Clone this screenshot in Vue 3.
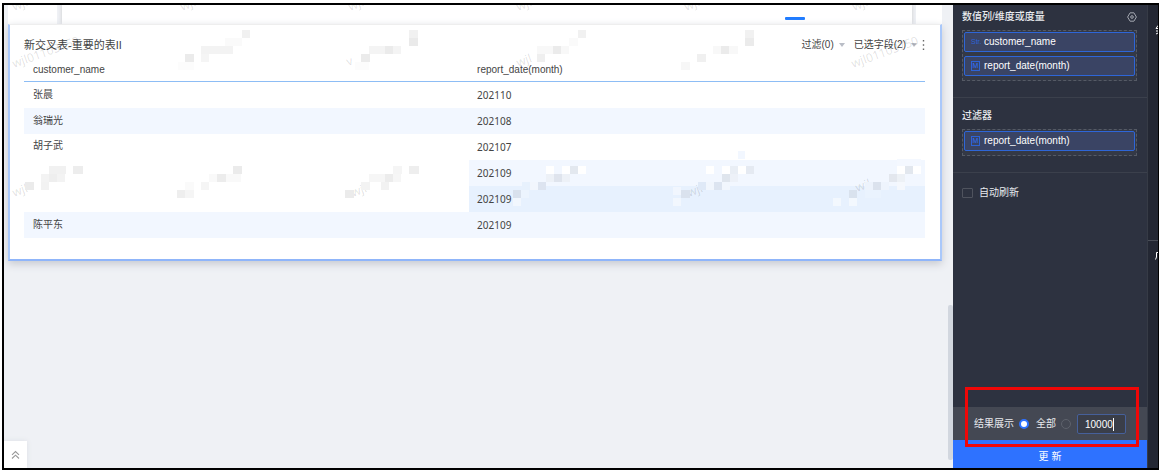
<script setup>
import { ref } from "vue";

let showAll = ref("all");
let limit = ref("10000");
let autoRefresh = ref(false);

//数值列和过滤器里的字段
let fields = ref([
  { type: "Str.", name: "customer_name" },
  { type: "M", name: "report_date(month)" },
]);
let filters = ref([{ type: "M", name: "report_date(month)" }]);

//span是合并的行数,没有name的行属于上一个人
let rows = ref([
  { name: "张晨", date: "202110" },
  { name: "翁瑞光", date: "202108", tint: "light" },
  { name: "胡子武", date: "202107", span: 3 },
  { date: "202109", tint: "light" },
  { date: "202109", tint: "deep" },
  { name: "陈平东", date: "202109", tint: "light" },
]);

//水印文字 [x, y, 文字]
let marks = [
  [14, 11, "wjl"], [182, 11, "wjl"], [350, 11, "wjl"], [518, 11, "wjl"], [686, 11, "wjl"], [854, 11, "wjl"],
  [14, 68, "wjl01103750"], [853, 68, "wjl01103750"],
  [348, 66, "v"], [518, 67, "wjl"],
  [14, 197, "wjl"], [353, 197, "wjl"], [689, 197, "wjl"], [857, 192, "wjl"],
];

//马赛克方块 [x, y, 宽, 颜色]
let blocks = [
  [242, 30, 8, "#f1f1f1"], [225, 38, 17, "#fafafa"], [201, 46, 32, "#f3f3f3"], [185, 54, 9, "#ebebeb"], [201, 54, 8, "#f5f5f5"], [178, 62, 16, "#fcfcfc"],
  [409, 30, 9, "#f1f1f1"], [409, 38, 9, "#eaeaea"], [369, 46, 32, "#f4f4f4"], [385, 46, 8, "#ebebeb"], [361, 54, 9, "#ebebeb"], [355, 62, 14, "#fcfcfc"],
  [578, 30, 8, "#f1f1f1"], [569, 38, 9, "#fafafa"], [537, 46, 32, "#f8f8f8"], [553, 46, 8, "#ebebeb"], [537, 54, 8, "#efefef"],
  [745, 30, 9, "#f1f1f1"], [745, 38, 9, "#ebebeb"], [713, 46, 25, "#f8f8f8"], [721, 46, 8, "#ebebeb"], [697, 54, 9, "#f0f0f0"], [681, 62, 9, "#f7f7f7"],
  [49, 166, 17, "#f1f1f1"], [73, 166, 10, "#ededed"], [41, 174, 24, "#f3f3f3"], [49, 174, 8, "#eeeeee"], [25, 182, 9, "#ebebeb"], [41, 182, 8, "#f2f2f2"],
  [233, 166, 9, "#ebebeb"], [209, 174, 32, "#f9f9f9"], [217, 174, 9, "#ececec"], [185, 182, 9, "#fafafa"], [201, 182, 8, "#f5f5f5"], [177, 190, 8, "#eeeeee"], [185, 190, 9, "#f5f5f5"],
  [393, 166, 9, "#f5f5f5"], [409, 166, 10, "#eeeeee"], [369, 174, 32, "#f6f6f6"], [385, 174, 8, "#ececec"], [361, 182, 9, "#f3f3f3"], [381, 182, 8, "#f2f2f2"], [345, 190, 9, "#ebebeb"],
  [546, 166, 8, "#ffffff"], [562, 166, 8, "#ffffff"], [570, 166, 8, "#e3e8ef"], [578, 166, 8, "#ffffff"], [546, 174, 24, "#edf1f7"], [554, 174, 8, "#dfe4ed"], [522, 182, 8, "#e7f1fd"], [530, 182, 8, "#f2f6fd"], [538, 182, 8, "#dde4f0"], [513, 190, 8, "#d9e1ed"], [521, 190, 8, "#ecf4fe"], [513, 198, 8, "#f2f7fe"],
  [738, 151, 7, "#f2f7ff"], [706, 166, 8, "#ffffff"], [722, 166, 8, "#ffffff"], [730, 166, 8, "#e9eef5"], [738, 166, 8, "#ffffff"], [746, 166, 8, "#e5eaf2"], [722, 174, 8, "#dfe5ed"], [730, 174, 8, "#edf1f8"], [698, 182, 8, "#dfe9f7"], [706, 182, 8, "#f1f6fd"], [714, 182, 8, "#dce4f0"], [722, 182, 8, "#f1f6fd"], [673, 187, 8, "#f1f6fe"], [681, 190, 9, "#dae2ee"], [673, 198, 8, "#f2f7fe"],
  [897, 159, 24, "#f4f8ff"], [897, 166, 8, "#ffffff"], [905, 166, 8, "#e2e7ee"], [913, 166, 8, "#ffffff"], [889, 174, 8, "#e3e7ee"], [897, 174, 8, "#edf1f6"], [865, 182, 8, "#edf3fc"], [873, 182, 8, "#dbe2ed"], [881, 182, 8, "#eef4fd"], [897, 182, 8, "#f5f8fd"], [849, 190, 8, "#d9e2ee"], [865, 190, 16, "#eaf3fe"], [833, 198, 8, "#f3f8fe"], [849, 198, 8, "#f3f8fe"],
];
</script>

<template>
  <div class="page">
    <div class="frame">
      <main class="workspace">
        <div class="strip">
          <div class="piece first"></div>
          <div class="piece middle"><div class="active-line"></div></div>
          <div class="piece last"></div>
        </div>

        <section class="card">
          <header class="card-head">
            <h3>新交叉表-重要的表II</h3>
            <div class="tools">
              <button type="button">过滤(0)<i class="arrow"></i></button>
              <button type="button">已选字段(2)<i class="arrow"></i></button>
              <button type="button" class="more" aria-label="更多">
                <svg width="3" height="12" viewBox="0 0 3 12"><path d="M.8 1h1.4v1.4H.8zM.8 5.3h1.4v1.4H.8zM.8 9.6h1.4V11H.8z" fill="#666" /></svg>
              </button>
            </div>
          </header>

          <table>
            <thead>
              <tr>
                <th class="col-name">customer_name</th>
                <th>report_date(month)</th>
              </tr>
            </thead>
            <tbody>
              <tr v-for="(row, i) in rows" :key="i" :class="row.tint">
                <td v-if="row.name" :rowspan="row.span || 1" :class="{ merged: row.span }">{{ row.name }}</td>
                <td class="num">{{ row.date }}</td>
              </tr>
            </tbody>
          </table>
        </section>

        <div class="scroll-thumb"></div>
        <button type="button" class="expand" aria-label="展开">
          <svg width="9" height="10" viewBox="0 0 9 10"><path d="M1 4.8 4.5 1.5 8 4.8M1 8.5l3.5-3.3L8 8.5" fill="none" stroke="#999" stroke-width="1.1" /></svg>
        </button>
      </main>

      <aside class="side">
        <section class="group">
          <div class="group-title">
            <h4>数值列/维度或度量</h4>
            <svg width="10" height="10" viewBox="0 0 10 10" fill="none" stroke="#a3a7b0">
              <path d="M3.1.8h3.8L9.4 5 6.9 9.2H3.1L.6 5z" stroke-linejoin="round" />
              <circle cx="5" cy="5" r="1.3" />
            </svg>
          </div>
          <div class="drop">
            <div v-for="f in fields" :key="f.name" class="chip">
              <span v-if="f.type == 'Str.'" class="str">Str.</span>
              <span v-else class="month">M</span>
              {{ f.name }}
            </div>
          </div>
        </section>

        <section class="group">
          <div class="group-title"><h4>过滤器</h4></div>
          <div class="drop">
            <div v-for="f in filters" :key="f.name" class="chip">
              <span class="month">M</span>
              {{ f.name }}
            </div>
          </div>
        </section>

        <label class="auto"><input type="checkbox" v-model="autoRefresh" />自动刷新</label>

        <div class="result">
          <span>结果展示</span>
          <label><input type="radio" name="show" value="all" v-model="showAll" />全部</label>
          <input type="radio" name="show" value="limit" v-model="showAll" aria-label="指定条数" />
          <div class="limit"><input type="text" v-model="limit" aria-label="条数" /></div>
        </div>
        <button type="button" class="update">更 新</button>
        <div class="red-box"></div>
      </aside>

      <!-- 右侧只露出一条边 -->
      <div class="rail">
        <div class="rail-top">
          <svg width="3" height="10" viewBox="0 0 3 10"><path d="M3 .5 1 3.5h2M1 6h2M1 9l2-1" fill="none" stroke="#fff" /></svg>
        </div>
        <div class="rail-bottom">
          <svg width="3" height="8" viewBox="0 0 3 8"><path d="M3 .5H1.500V5L.5 7.500" fill="none" stroke="#fff" /></svg>
        </div>
      </div>
    </div>

    <!-- 水印 -->
    <svg class="watermark" width="950" height="262" viewBox="0 0 950 262" aria-hidden="true">
      <svg x="5" y="5" width="940" height="252" viewBox="5 5 940 252">
        <text v-for="(m, i) in marks" :key="'m' + i" :transform="`translate(${m[0]} ${m[1]}) rotate(-20)`">{{ m[2] }}</text>
      </svg>
      <rect v-for="(b, i) in blocks" :key="'b' + i" :x="b[0]" :y="b[1]" :width="b[2]" height="8" :fill="b[3]" />
    </svg>
  </div>
</template>

<style>
body {
  margin: 0;
}
</style>

<style scoped>
* {
  box-sizing: border-box;
}

.page {
  position: relative;
  height: 100vh;
  padding: 3px 0 0 2px;
  background: #fff;
  overflow: hidden;
  font-family: "Liberation Sans", "Noto Sans CJK SC", sans-serif;
  font-size: 10px;
  line-height: 16px;
  color: #444;
}

.frame {
  display: grid;
  grid-template-columns: 1fr 194px 11px;
  height: 100%;
  border: 2px solid #000;
  border-right-width: 1px;
}

button {
  padding: 0;
  border: 0;
  background: none;
  font: inherit;
  color: inherit;
}

h3,
h4 {
  margin: 0;
  font-weight: normal;
}

.workspace {
  position: relative;
  padding: 0 11px 0 4px;
  background: #eff1f5;
  overflow: hidden;
}

.strip {
  display: flex;
  height: 19px;
}

.piece {
  background: #fff;
}

.first {
  width: 49px;
}

.middle {
  flex: 1;
  margin-left: 5px;
  box-shadow: 0 0 4px #ccc;
}

.last {
  width: 26px;
  margin-left: 4px;
}

.active-line {
  width: 20px;
  height: 3px;
  margin: 12px 0 0 85%;
  border-radius: 1px;
  background: #1f7bff;
}

.card {
  position: relative;
  padding: 0 15px 21px 14px;
  background: #fff;
  border: 2px solid #a9c8fb;
  border-top: 1px solid #eee;
  border-bottom-color: #8fb5fa;
  box-shadow: 0 3px 8px #c6c9d0;
}

.card-head {
  display: flex;
  align-items: center;
  justify-content: space-between;
  height: 34px;
  padding-top: 5px;
}

.card-head h3 {
  font-size: 11px;
}

.tools {
  display: flex;
  align-items: center;
  gap: 9px;
}

.tools button {
  display: flex;
  align-items: center;
  gap: 5px;
}

.tools .more {
  margin-left: -4px;
}

.arrow {
  border: 3px solid transparent;
  border-top: 4px solid #b9bdc6;
  border-bottom: 0;
}

table {
  width: 100%;
  border-collapse: separate;
  border-spacing: 0;
  table-layout: fixed;
}

th {
  height: 23px;
  padding: 0 9px;
  border-bottom: 1px solid #8dbdf5;
  font-weight: normal;
  text-align: left;
}

th:last-child,
.num {
  padding: 0 8px;
}

.col-name {
  width: 49.4%;
}

td {
  height: 26px;
  padding: 0 9px;
}

.num {
  font-family: "Noto Sans", sans-serif;
}

.merged {
  padding-top: 4px;
  vertical-align: top;
}

.light td {
  background: #f2f7ff;
}

.deep td {
  background: #e7f1fe;
}

.scroll-thumb {
  position: absolute;
  right: 0;
  bottom: 8px;
  width: 5px;
  height: 155px;
  border-radius: 2px;
  background: #d2d7df;
}

.expand {
  position: absolute;
  left: 0;
  bottom: 0;
  width: 23px;
  height: 27px;
  background: #fff;
  box-shadow: 0 0 5px #dcdfe5;
}

.expand svg {
  display: block;
  margin: 0 auto;
}

.side {
  position: relative;
  display: flex;
  flex-direction: column;
  background: #2d3240;
  color: #e8eaee;
}

.group {
  padding: 4px 10px 16px 9px;
  border-bottom: 1px solid #3b404c;
}

.group + .group {
  padding-top: 10px;
}

.group-title {
  display: flex;
  align-items: center;
  justify-content: space-between;
  margin-bottom: 5px;
}

.group-title h4 {
  font-weight: 500;
  font-size: 10px;
}

.drop {
  display: flex;
  flex-direction: column;
  gap: 4px;
  padding: 1px 1px 4px;
  border: 1px dashed #555a65;
  background: #343946;
}

.chip {
  display: flex;
  align-items: center;
  height: 20px;
  padding-left: 6px;
  border: 1px solid #2e66d8;
  border-radius: 2px;
  background: #3a4464;
  color: #fff;
}

.str {
  width: 13px;
  font-size: 7px;
  color: #2d63d6;
}

.month {
  width: 9px;
  height: 10px;
  margin-right: 4px;
  border: 1px solid #2d63d6;
  font-size: 7px;
  line-height: 8px;
  text-align: center;
  color: #2f73ff;
}

.auto {
  display: flex;
  align-items: center;
  gap: 6px;
  margin: 12px 9px;
}

.auto input {
  appearance: none;
  width: 11px;
  height: 10px;
  margin: 0;
  border: 1px solid #4f535e;
  border-radius: 1px;
}

.result {
  display: flex;
  align-items: center;
  height: 33px;
  margin-top: auto;
  padding-left: 21px;
  background: #444853;
}

.result label {
  display: flex;
  align-items: center;
  gap: 7px;
  margin: 0 5px;
}

.result input[type="radio"] {
  appearance: none;
  width: 10px;
  height: 10px;
  margin: 0;
  border: 1px solid #5e626c;
  border-radius: 50%;
}

.result input[type="radio"]:checked {
  border: 2px solid #2e72ff;
  background: #fff;
}

.limit {
  position: relative;
  margin-left: 6px;
}

.limit input {
  display: block;
  width: 49px;
  height: 20px;
  padding: 1px 7px 0;
  border: 1px solid #46609a;
  border-radius: 2px;
  outline: 0;
  background: #3a3e49;
  font: inherit;
  color: #fff;
}

/* 光标 */
.limit::after {
  content: "";
  position: absolute;
  left: 36px;
  top: 4px;
  width: 1px;
  height: 13px;
  background: #fff;
}

.update {
  height: 28px;
  padding-top: 6px;
  background: #2e72ff;
  color: #fff;
}

.red-box {
  position: absolute;
  left: 12px;
  right: 8px;
  bottom: 21px;
  height: 60px;
  border: 3px solid #f00707;
}

.rail {
  display: flex;
  flex-direction: column;
  border-left: 1px solid #363b46;
  background: #232733;
}

.rail-top {
  height: 236px;
  padding: 19px 0 0 7px;
  border-bottom: 1px solid #4a4e58;
}

.rail-bottom {
  padding: 8px 0 0 7px;
}

.watermark {
  position: absolute;
  left: 0;
  top: 0;
  pointer-events: none;
}

.watermark text {
  font-family: "Noto Sans", sans-serif;
  font-size: 12px;
  fill: #000;
  fill-opacity: 0.12;
}
</style>
